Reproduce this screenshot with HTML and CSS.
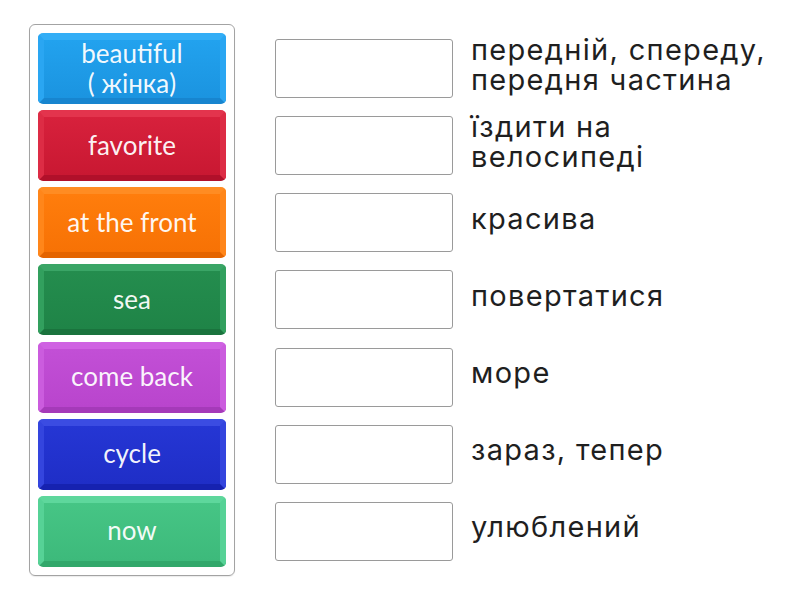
FILE: index.html
```html
<!DOCTYPE html>
<html lang="uk">
<head>
<meta charset="utf-8">
<title>Match up</title>
<link rel="stylesheet" href="styles.css">
</head>
<body>
<div class="page">
  <div class="tiles">
    <div class="tile c-blue"><span>beautiful<br>( жінка)</span></div>
    <div class="tile c-red"><span>favorite</span></div>
    <div class="tile c-orange"><span>at the front</span></div>
    <div class="tile c-green"><span>sea</span></div>
    <div class="tile c-purple"><span>come back</span></div>
    <div class="tile c-navy"><span>cycle</span></div>
    <div class="tile c-mint"><span>now</span></div>
  </div>
  <div class="targets">
    <div class="row"><div class="slot"></div><div class="def">передній, спереду,<br>передня частина</div></div>
    <div class="row"><div class="slot"></div><div class="def">їздити на<br>велосипеді</div></div>
    <div class="row"><div class="slot"></div><div class="def">красива</div></div>
    <div class="row"><div class="slot"></div><div class="def">повертатися</div></div>
    <div class="row"><div class="slot"></div><div class="def">море</div></div>
    <div class="row"><div class="slot"></div><div class="def">зараз, тепер</div></div>
    <div class="row"><div class="slot"></div><div class="def">улюблений</div></div>
  </div>
</div>
</body>
</html>
```
FILE: styles.css
```css
html, body {
  margin: 0;
  padding: 0;
  background: #ffffff;
}
.page {
  display: flex;
  align-items: flex-start;
  padding: 24px 0 0 29px;
  width: 800px;
  height: 600px;
  box-sizing: border-box;
}
.tiles {
  display: flex;
  flex-direction: column;
  gap: 6.17px;
  width: 206px;
  box-sizing: border-box;
  padding: 8px 8px 8px 8px;
  border: 1px solid #a3a3a3;
  border-radius: 6px;
  box-shadow: 0 1px 1px rgba(0,0,0,0.08);
}
.tile {
  height: 71px;
  box-sizing: border-box;
  border-style: solid;
  border-width: 7px 6px 6px 6px;
  border-radius: 5px;
  display: flex;
  align-items: center;
  justify-content: center;
  text-align: center;
  font-family: Lato, "Open Sans", sans-serif;
  font-size: 26px;
  line-height: 30px;
  color: rgba(255,255,255,0.95);
}
.tile span {
  margin-top: -3px;
}
.c-blue   { background: linear-gradient(#22a2ee, #1b94e0); border-color: #33aef6 #2aa6f2 #1785cf #2aa6f2; }
.c-red    { background: linear-gradient(#d7213c, #c91832); border-color: #e3344d #dd2c45 #b1102a #dd2c45; }
.c-orange { background: linear-gradient(#ff7d0c, #f77205); border-color: #ff8c22 #ff861a #e46400 #ff861a; }
.c-green  { background: linear-gradient(#248d4e, #1f8447); border-color: #3aa566 #32a05e #1a733d #32a05e; }
.c-purple { background: linear-gradient(#c24fd6, #b945cd); border-color: #cf62e2 #cb5cde #a53ab9 #cb5cde; }
.c-navy   { background: linear-gradient(#2536d4, #1f2ec7); border-color: #3b4ce2 #3445de #1622b0 #3445de; }
.c-mint   { background: linear-gradient(#46c585, #3dba7b); border-color: #5ed79c #56d296 #32a86b #56d296; }

.targets {
  display: flex;
  flex-direction: column;
  gap: 6.17px;
  margin-left: 40px;
  padding-top: 9px;
}
.row {
  height: 71px;
  display: flex;
  align-items: center;
}
.slot {
  width: 178px;
  height: 59px;
  box-sizing: border-box;
  border: 1px solid #9a9a9a;
  border-radius: 3px;
  background: #fff;
  flex: none;
}
.def {
  margin-left: 18px;
  margin-bottom: 8px;
  font-family: Inter, "Noto Sans", sans-serif;
  font-size: 29px;
  line-height: 30px;
  letter-spacing: 1.3px;
  color: #1f1f1f;
  white-space: nowrap;
}
```
